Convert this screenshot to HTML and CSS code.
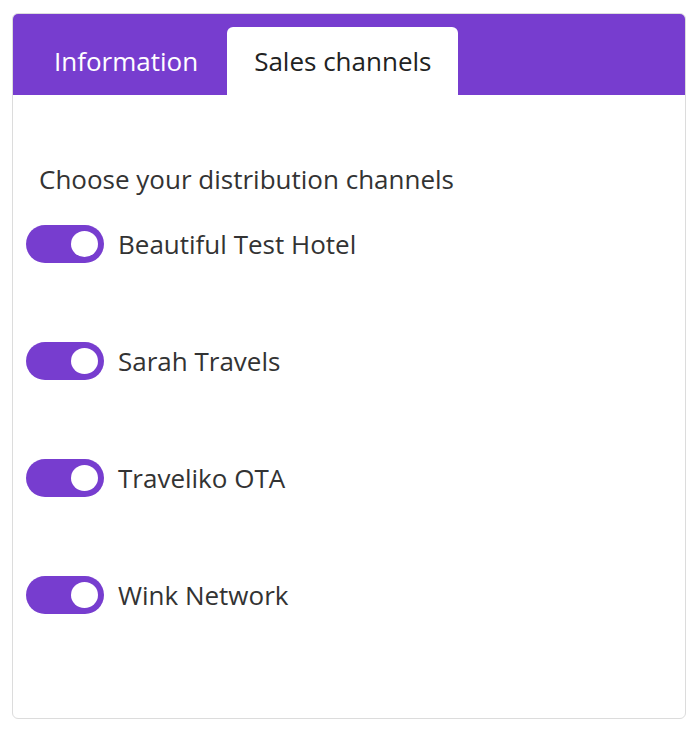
FILE: index.html
```html
<!DOCTYPE html>
<html lang="en">
<head>
    <meta charset="UTF-8">
    <meta name="viewport" content="width=device-width, initial-scale=1.0">
    <title>Sales channels</title>
    <link rel="stylesheet" href="styles.css">
</head>
<body>
    <div class="card">
        <div class="tabs">
            <div class="tab">Information</div>
            <div class="tab active">Sales channels</div>
        </div>
        <div class="panel">
            <h3 class="panel-title">Choose your distribution channels</h3>
            <div class="channel">
                <span class="switch on"><span class="knob"></span></span>
                <span class="channel-name">Beautiful Test Hotel</span>
            </div>
            <div class="channel">
                <span class="switch on"><span class="knob"></span></span>
                <span class="channel-name">Sarah Travels</span>
            </div>
            <div class="channel">
                <span class="switch on"><span class="knob"></span></span>
                <span class="channel-name">Traveliko OTA</span>
            </div>
            <div class="channel">
                <span class="switch on"><span class="knob"></span></span>
                <span class="channel-name">Wink Network</span>
            </div>
        </div>
    </div>
</body>
</html>
```

FILE: styles.css
```css
body {
    margin: 0;
    padding: 13px 14px 17px 12px;
    font-family: "Open Sans", "Noto Sans", sans-serif;
    background: #fff;
    color: #333;
}
.card {
    border: 1px solid #dcdcdc;
    border-radius: 6px;
    overflow: hidden;
    height: 706px;
    box-sizing: border-box;
}
.tabs {
    display: flex;
    gap: 2px;
    background: #773dcf;
    padding: 13px 0 0 14px;
    height: 81px;
    box-sizing: border-box;
}
.tab {
    padding: 0 27px;
    line-height: 68px;
    font-size: 26px;
    color: #fff;
    border-radius: 6px 6px 0 0;
}
.tab.active {
    background: #fff;
    color: #222;
}
.panel {
    padding: 67px 13px 0;
}
.panel-title {
    margin: 0 0 29px 13px;
    font-size: 26px;
    font-weight: 400;
    line-height: 34px;
    color: #333;
}
.channel {
    display: flex;
    align-items: center;
    gap: 14px;
    height: 38px;
    margin-bottom: 79px;
}
.switch {
    width: 78px;
    height: 38px;
    border-radius: 19px;
    background: #ccc;
    display: flex;
    align-items: center;
    justify-content: flex-start;
    padding: 0 6px;
    box-sizing: border-box;
    flex-shrink: 0;
}
.switch.on {
    background: #773dcf;
    justify-content: flex-end;
}
.knob {
    width: 27px;
    height: 26px;
    border-radius: 50%;
    background: #fff;
}
.channel-name {
    font-size: 26px;
    color: #333;
}
```
